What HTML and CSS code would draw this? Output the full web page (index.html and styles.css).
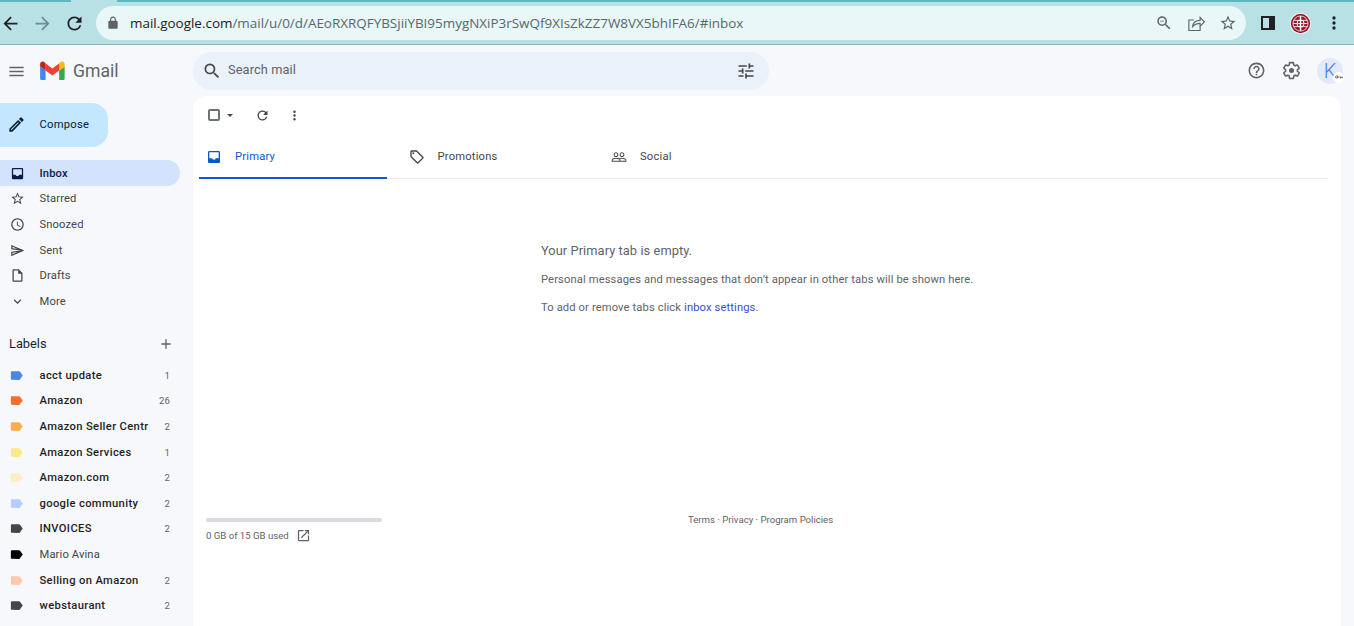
FILE: index.html
```html
<!DOCTYPE html>
<html lang="en">
<head>
<meta charset="utf-8">
<title>Inbox - Gmail</title>
<link rel="stylesheet" href="styles.css">
</head>
<body>
<svg class="sprite" xmlns="http://www.w3.org/2000/svg">
  <symbol id="i-arrow" viewBox="0 0 24 24"><path d="M20 11H7.83l5.59-5.59L12 4l-8 8 8 8 1.41-1.41L7.83 13H20v-2z"/></symbol>
  <symbol id="i-reload" viewBox="0 0 24 24"><path d="M17.65 6.35A7.958 7.958 0 0 0 12 4c-4.42 0-7.99 3.58-7.99 8s3.57 8 7.99 8c3.73 0 6.84-2.55 7.73-6h-2.08A5.99 5.99 0 0 1 12 18c-3.31 0-6-2.69-6-6s2.69-6 6-6c1.66 0 3.14.69 4.22 1.78L13 11h7V4l-2.35 2.35z"/></symbol>
  <symbol id="i-star" viewBox="0 0 24 24"><path d="M22 9.24l-7.19-.62L12 2 9.19 8.63 2 9.24l5.46 4.73L5.82 21 12 17.27 18.18 21l-1.63-7.03L22 9.24zM12 15.4l-3.76 2.27 1-4.28-3.32-2.88 4.38-.38L12 6.1l1.71 4.04 4.38.38-3.32 2.88 1 4.28L12 15.4z"/></symbol>
  <symbol id="i-search" viewBox="0 0 24 24"><path d="M15.5 14h-.79l-.28-.27A6.471 6.471 0 0 0 16 9.5 6.5 6.5 0 1 0 9.5 16c1.61 0 3.09-.59 4.23-1.57l.27.28v.79l5 4.99L20.49 19l-4.99-5zm-6 0C7.01 14 5 11.99 5 9.5S7.01 5 9.5 5 14 7.01 14 9.5 11.99 14 9.5 14z"/></symbol>
  <symbol id="i-inbox" viewBox="0 0 24 24"><path fill-rule="evenodd" d="M19 3H5c-1.1 0-2 .9-2 2v14c0 1.1.9 2 2 2h14c1.1 0 2-.9 2-2V5c0-1.1-.9-2-2-2zm0 11h-4c-.55 1.16-1.73 2-3.13 2s-2.6-.84-3.13-2H5V5h14v9z"/></symbol>
  <symbol id="i-more" viewBox="0 0 24 24"><path d="M12 8a2 2 0 1 0 0-4 2 2 0 0 0 0 4zm0 2a2 2 0 1 0 0 4 2 2 0 0 0 0-4zm0 6a2 2 0 1 0 0 4 2 2 0 0 0 0-4z"/></symbol>
  <symbol id="i-label" viewBox="0 0 24 24"><path d="M17.63 5.84C17.27 5.33 16.67 5 16 5L5 5.01C3.9 5.01 3 5.9 3 7v10c0 1.1.9 1.99 2 1.99L16 19c.67 0 1.27-.33 1.63-.84L22 12l-4.37-6.16z"/></symbol>
</svg>

<header class="chrome">
  <div class="tabstrip"><span class="strip-a"></span><span class="strip-gap"></span><span class="strip-b"></span></div>
  <div class="toolbar">
    <svg class="cbtn back"><use href="#i-arrow"/></svg>
    <svg class="cbtn forward"><use href="#i-arrow"/></svg>
    <svg class="cbtn reload"><use href="#i-reload"/></svg>
    <div class="omnibox">
      <svg class="lock" viewBox="0 0 24 24"><path d="M18 8h-1V6c0-2.76-2.24-5-5-5S7 3.24 7 6v2H6c-1.1 0-2 .9-2 2v10c0 1.1.9 2 2 2h12c1.1 0 2-.9 2-2V10c0-1.1-.9-2-2-2zM9 6c0-1.66 1.34-3 3-3s3 1.34 3 3v2H9V6z"/></svg>
      <span class="url"><span class="host">mail.google.com</span>/mail/u/0/d/AEoRXRQFYBSjiiYBI95mygNXiP3rSwQf9XIsZkZZ7W8VX5bhIFA6/#inbox</span>
      <span class="omni-actions">
        <svg class="oicon" viewBox="0 0 24 24"><path d="M15.5 14h-.79l-.28-.27A6.471 6.471 0 0 0 16 9.5 6.5 6.5 0 1 0 9.5 16c1.61 0 3.09-.59 4.23-1.57l.27.28v.79l5 4.99L20.49 19l-4.99-5zm-6 0C7.01 14 5 11.99 5 9.5S7.01 5 9.5 5 14 7.01 14 9.5 11.99 14 9.5 14zM7 9h5v1H7z"/></svg>
        <svg class="oicon share" viewBox="0 0 24 24"><path d="M9 8H2.500v14h15v-5"/><path d="M7.500 17c.5-5.500 4.500-8.500 10-8.500V4.500l5.500 6-5.500 6V12.500c-4.500 0-7.500 1.500-10 4.500z"/></svg>
        <svg class="oicon"><use href="#i-star"/></svg>
      </span>
    </div>
    <svg class="sidepanel" viewBox="0 0 14 14"><path fill-rule="evenodd" d="M0 0h14v14H0zM2 2v10h6V2z"/></svg>
    <svg class="extension" viewBox="0 0 20 20">
      <circle cx="10" cy="10" r="10" fill="#fff"/>
      <circle cx="10" cy="10" r="9.200" fill="#96182f"/>
      <circle cx="10" cy="10" r="7.200" fill="none" stroke="#fff" stroke-width=".7"/>
      <path d="M3.500 7h13M3 10h14M3.500 13h13" stroke="#fff" stroke-width=".8"/>
      <path d="M10 3v14" stroke="#fff" stroke-width="1.400"/>
      <circle cx="10" cy="10" r="3.400" fill="none" stroke="#fff" stroke-width=".9"/>
    </svg>
    <svg class="cmenu"><use href="#i-more"/></svg>
  </div>
</header>

<div class="app">
  <div class="app-head">
    <div class="brand">
      <svg class="hamburger" viewBox="0 0 24 24"><path d="M3 18h18v-2H3v2zm0-5h18v-2H3v2zm0-7v2h18V6H3z"/></svg>
      <svg class="gmail-logo" viewBox="0 0 52 42">
        <path fill="#4285f4" d="M3.500 40h8V20L0 11.500v25C0 38.400 1.600 40 3.500 40z"/>
        <path fill="#34a853" d="M40 40h8c2 0 3.500-1.600 3.500-3.500v-25L40 20z"/>
        <path fill="#fbbc04" d="M40 5v15l11.500-8.500v-5c0-4.300-4.900-6.700-8.300-4.200z"/>
        <path fill="#ea4335" d="M11.500 20V5l14.300 10.700L40 5v15L25.800 30.700z"/>
        <path fill="#c5221f" d="M0 6.500v5L11.500 20V5L8.300 2.300C4.900-.2 0 2.200 0 6.500z"/>
      </svg>
      <span class="gmail-word">Gmail</span>
    </div>
    <div class="search">
      <svg class="search-icon"><use href="#i-search"/></svg>
      <span class="search-text">Search mail</span>
      <svg class="tune" viewBox="0 0 24 24"><path d="M3 17v2h6v-2H3zM3 5v2h10V5H3zm10 16v-2h8v-2h-8v-2h-2v6h2zM7 9v2H3v2h4v2h2V9H7zm14 4v-2H11v2h10zm-6-4h2V7h4V5h-4V3h-2v6z"/></svg>
    </div>
    <div class="head-actions">
      <svg class="head-icon" viewBox="0 0 24 24"><path d="M11 18h2v-2h-2v2zm1-16C6.480 2 2 6.480 2 12s4.480 10 10 10 10-4.480 10-10S17.520 2 12 2zm0 18c-4.410 0-8-3.590-8-8s3.590-8 8-8 8 3.590 8 8-3.590 8-8 8zm0-14c-2.210 0-4 1.790-4 4h2c0-1.100.9-2 2-2s2 .9 2 2c0 2-3 1.750-3 5h2c0-2.250 3-2.500 3-5 0-2.210-1.790-4-4-4z"/></svg>
      <svg class="head-icon" viewBox="0 0 24 24"><path class="gear-line" d="M19.430 12.980c.04-.32.07-.64.07-.98s-.03-.66-.07-.98l2.110-1.650c.19-.15.24-.42.12-.64l-2-3.460c-.12-.22-.39-.3-.61-.22l-2.490 1c-.52-.4-1.080-.73-1.690-.98l-.38-2.650C14.460 2.180 14.250 2 14 2h-4c-.25 0-.46.18-.49.42l-.38 2.650c-.61.25-1.170.59-1.690.98l-2.490-1c-.23-.09-.49 0-.61.22l-2 3.460c-.13.22-.07.49.12.64l2.110 1.650c-.04.32-.07.65-.07.98s.03.66.07.98l-2.110 1.650c-.19.15-.24.42-.12.64l2 3.460c.12.22.39.3.61.22l2.490-1c.52.4 1.080.73 1.690.98l.38 2.650c.03.24.24.42.49.42h4c.25 0 .46-.18.49-.42l.38-2.650c.61-.25 1.170-.59 1.690-.98l2.490 1c.23.09.49 0 .61-.22l2-3.460c.12-.22.07-.49-.12-.64l-2.110-1.650z"/><circle cx="12" cy="12" r="3.200"/></svg>
      <div class="avatar">K
        <span class="key-badge"><svg class="key" viewBox="0 0 12 6"><circle class="key-ring" cx="2.500" cy="3" r="1.700"/><path d="M4 2.500h8v1h-1v1.500h-1V3.500H8.500V5h-1V3.500H4z"/></svg></span>
      </div>
    </div>
  </div>

  <div class="app-body">
    <aside class="sidebar">
      <button class="compose">
        <svg class="compose-icon" viewBox="0 0 24 24"><path d="M3 17.250V21h3.750L17.810 9.940l-3.750-3.750L3 17.250zM5.920 19H5v-.92l9.060-9.060.92.92L5.920 19zM20.710 5.630l-2.340-2.340c-.2-.2-.45-.29-.71-.29s-.51.1-.7.29l-1.830 1.830 3.750 3.750 1.830-1.830c.39-.39.39-1.020 0-1.410z"/></svg>
        <span>Compose</span>
      </button>
      <nav class="nav">
        <a class="row active"><svg class="row-icon"><use href="#i-inbox"/></svg><span>Inbox</span></a>
        <a class="row"><svg class="row-icon"><use href="#i-star"/></svg><span>Starred</span></a>
        <a class="row"><svg class="row-icon" viewBox="0 0 24 24"><path d="M11.990 2C6.470 2 2 6.480 2 12s4.470 10 9.990 10C17.520 22 22 17.520 22 12S17.520 2 11.990 2zM12 20c-4.420 0-8-3.580-8-8s3.580-8 8-8 8 3.580 8 8-3.580 8-8 8zm.5-13H11v6l5.250 3.150.75-1.230-4.500-2.670z"/></svg><span>Snoozed</span></a>
        <a class="row"><svg class="row-icon" viewBox="0 0 24 24"><path d="M4.010 6.030l7.510 3.220-7.520-1 .01-2.220m7.500 8.720L4 17.970v-2.220l7.510-1M2.010 3L2 10l15 2-15 2 .01 7L23 12 2.010 3z"/></svg><span>Sent</span></a>
        <a class="row"><svg class="row-icon" viewBox="0 0 24 24"><path d="M14 2H6c-1.100 0-1.990.9-1.990 2L4 20c0 1.100.89 2 1.990 2H18c1.100 0 2-.9 2-2V8l-6-6zM6 20V4h7v5h5v11H6z"/></svg><span>Drafts</span></a>
        <a class="row"><svg class="row-icon" viewBox="0 0 24 24"><path d="M7.410 8.590L12 13.170l4.590-4.580L18 10l-6 6-6-6z"/></svg><span>More</span></a>
      </nav>
      <div class="labels-head">
        <span>Labels</span>
        <svg class="plus" viewBox="0 0 24 24"><path d="M19 13h-6v6h-2v-6H5v-2h6V5h2v6h6v2z"/></svg>
      </div>
      <div class="labels">
        <a class="row unread"><svg class="label-icon c-blue"><use href="#i-label"/></svg><span class="name">acct update</span><span class="count">1</span></a>
        <a class="row unread"><svg class="label-icon c-orange"><use href="#i-label"/></svg><span class="name">Amazon</span><span class="count">26</span></a>
        <a class="row unread"><svg class="label-icon c-amber"><use href="#i-label"/></svg><span class="name">Amazon Seller Centr</span><span class="count">2</span></a>
        <a class="row unread"><svg class="label-icon c-yellow"><use href="#i-label"/></svg><span class="name">Amazon Services</span><span class="count">1</span></a>
        <a class="row unread"><svg class="label-icon c-cream"><use href="#i-label"/></svg><span class="name">Amazon.com</span><span class="count">2</span></a>
        <a class="row unread"><svg class="label-icon c-sky"><use href="#i-label"/></svg><span class="name">google community</span><span class="count">2</span></a>
        <a class="row unread"><svg class="label-icon c-char"><use href="#i-label"/></svg><span class="name">INVOICES</span><span class="count">2</span></a>
        <a class="row"><svg class="label-icon c-black"><use href="#i-label"/></svg><span class="name">Mario Avina</span></a>
        <a class="row unread"><svg class="label-icon c-peach"><use href="#i-label"/></svg><span class="name">Selling on Amazon</span><span class="count">2</span></a>
        <a class="row unread"><svg class="label-icon c-char"><use href="#i-label"/></svg><span class="name">webstaurant</span><span class="count">2</span></a>
      </div>
    </aside>

    <main class="card">
      <div class="actions">
        <span class="checkbox"></span>
        <span class="caret"></span>
        <svg class="action-icon refresh"><use href="#i-reload"/></svg>
        <svg class="action-icon kebab"><use href="#i-more"/></svg>
      </div>
      <div class="tabs">
        <div class="tab selected"><svg class="tab-icon"><use href="#i-inbox"/></svg><span>Primary</span></div>
        <div class="tab"><svg class="tab-icon" viewBox="0 0 24 24"><path d="M21.410 11.580l-9-9C12.050 2.220 11.550 2 11 2H4c-1.100 0-2 .9-2 2v7c0 .55.22 1.050.59 1.420l9 9c.36.36.86.58 1.410.58.55 0 1.050-.22 1.410-.59l7-7c.37-.36.59-.86.59-1.410 0-.55-.23-1.060-.59-1.420zM13 20.010L4 11V4h7v-.01l9 9-7 7.020z"/><circle cx="6.500" cy="6.500" r="1.500"/></svg><span>Promotions</span></div>
        <div class="tab"><svg class="tab-icon" viewBox="0 0 24 24"><path d="M16.500 13c-1.200 0-3.070.34-4.500 1-1.430-.67-3.300-1-4.500-1C5.330 13 1 14.080 1 16.250V19h22v-2.750c0-2.170-4.330-3.250-6.500-3.250zm-4 4.500h-10v-1.250c0-.54 2.560-1.750 5-1.750s5 1.210 5 1.750v1.250zm9 0H14v-1.250c0-.46-.2-.86-.52-1.220.88-.3 1.960-.53 3.020-.53 2.440 0 5 1.210 5 1.750v1.250zM7.500 12c1.930 0 3.500-1.570 3.500-3.500S9.430 5 7.500 5 4 6.570 4 8.500 5.570 12 7.500 12zm0-5.500c1.100 0 2 .9 2 2s-.9 2-2 2-2-.9-2-2 .9-2 2-2zm9 5.500c1.930 0 3.500-1.570 3.500-3.500S18.430 5 16.500 5 13 6.570 13 8.500s1.570 3.500 3.500 3.500zm0-5.500c1.100 0 2 .9 2 2s-.9 2-2 2-2-.9-2-2 .9-2 2-2z"/></svg><span>Social</span></div>
      </div>
      <section class="empty">
        <h2 class="empty-title">Your Primary tab is empty.</h2>
        <p class="empty-line">Personal messages and messages that don’t appear in other tabs will be shown here.</p>
        <p class="empty-line">To add or remove tabs click <a class="link">inbox settings</a>.</p>
      </section>
      <footer class="foot">
        <div class="storage">
          <div class="meter"></div>
          <div class="used"><span>0 GB of 15 GB used</span><svg class="open-icon" viewBox="0 0 24 24"><path d="M19 19H5V5h7V3H5a2 2 0 0 0-2 2v14a2 2 0 0 0 2 2h14c1.100 0 2-.9 2-2v-7h-2v7zM14 3v2h3.590l-9.830 9.830 1.410 1.410L19 6.410V10h2V3h-7z"/></svg></div>
        </div>
        <div class="terms">Terms · Privacy · Program Policies</div>
      </footer>
    </main>
  </div>
</div>
</body>
</html>
```

FILE: styles.css
```css
* { box-sizing: border-box; }
html, body { margin: 0; height: 100%; }
body {
  width: 1354px;
  height: 626px;
  overflow: hidden;
  display: flex;
  flex-direction: column;
  background: #f6f8fc;
  font-family: Roboto, "Liberation Sans", sans-serif;
  font-size: 11.2px;
  color: #444746;
}
.sprite { display: none; }
svg { display: block; flex: none; }

/* browser chrome */
.chrome { height: 45px; flex: none; background: #b8e1e5; border-bottom: 1px solid #8fb6b9; }
.tabstrip { display: flex; height: 2px; }
.strip-a { width: 71px; background: #5fb8bd; }
.strip-gap { width: 46px; }
.strip-b { flex: 1; background: #5fb8bd; }
.toolbar { display: flex; align-items: center; height: 42px; }
.cbtn { width: 21px; height: 21px; }
.back { margin-left: 0; fill: #202124; }
.forward { margin-left: 11px; fill: #6f8c8f; transform: scaleX(-1); }
.reload { margin-left: 11px; fill: #202124; }
.omnibox {
  display: flex;
  align-items: center;
  width: 1150px;
  height: 34px;
  margin-left: 11px;
  padding: 0 10px;
  border-radius: 17px;
  background: #e9f7f8;
}
.lock { width: 14px; height: 14px; fill: #5f6368; }
.url {
  margin-left: 10px;
  font-family: "Open Sans", "Noto Sans", sans-serif;
  font-size: 13.450px;
  color: #55696b;
  white-space: nowrap;
}
.host { color: #202124; }
.omni-actions { display: flex; gap: 14px; margin-left: auto; margin-right: -1px; }
.oicon { width: 18px; height: 18px; fill: #5f6368; }
.oicon.share { fill: none; stroke: #5f6368; stroke-width: 1.5px; }
.sidepanel { width: 14px; height: 14px; margin-left: 15px; fill: #202124; }
.extension { width: 21px; height: 21px; margin-left: 15px; }
.cmenu { width: 20px; height: 20px; margin-left: 13px; fill: #202124; }

/* app */
.app { flex: 1; display: flex; flex-direction: column; min-height: 0; }
.app-head { display: flex; align-items: center; height: 51px; flex: none; }
.brand { display: flex; align-items: center; width: 193px; padding-left: 7px; padding-top: 1px; }
.hamburger { width: 19px; height: 19px; fill: #5f6368; }
.gmail-logo { width: 25px; height: 20px; margin-left: 14px; }
.gmail-word { margin-left: 8px; font-size: 17.600px; color: #5f6368; }
.search {
  display: flex;
  align-items: center;
  width: 576px;
  height: 38px;
  padding: 0 13px 0 9px;
  border-radius: 19px;
  background: #eaf1fb;
}
.search-icon { width: 20px; height: 20px; fill: #444746; }
.search-text { margin: -2px 0 0 6px; font-size: 12.800px; color: #5f6368; letter-spacing: .1px; }
.tune { width: 20px; height: 20px; margin-left: auto; fill: #444746; }
.head-actions { display: flex; align-items: center; margin-left: auto; padding-right: 11px; }
.head-icon { width: 19px; height: 19px; margin-right: 16px; fill: #5f6368; }
.gear-line { fill: none; stroke: #5f6368; stroke-width: 2px; }
.avatar {
  position: relative;
  width: 26px;
  height: 26px;
  border-radius: 50%;
  background: #e3e9fb;
  color: #4a7ee6;
  font-size: 20px;
  font-weight: 300;
  line-height: 26px;
  text-align: center;
}
.key-badge {
  position: absolute;
  right: -1px;
  bottom: 1px;
  display: flex;
  align-items: center;
  justify-content: center;
  width: 11px;
  height: 11px;
  border-radius: 50%;
  background: #fff;
}
.key { width: 8px; height: 4px; fill: #202124; }
.key-ring { fill: none; stroke: #202124; }

.app-body { flex: 1; display: flex; min-height: 0; }
.sidebar { width: 193px; flex: none; padding-top: 7px; }
.compose {
  display: flex;
  align-items: center;
  width: 108px;
  height: 44px;
  padding: 0 0 2px 7px;
  border: 0;
  border-radius: 0 16px 16px 0;
  background: #c2e7ff;
  color: #001d35;
  font: 400 11.200px Roboto, sans-serif;
  letter-spacing: .25px;
}
.compose-icon { width: 19px; height: 19px; margin-right: 13.500px; fill: #001d35; }
.nav { margin-top: 13px; }
.nav .row { padding-top: 1px; }
.row {
  display: flex;
  align-items: center;
  width: 180px;
  height: 25.600px;
  padding: 0 10px;
  border-radius: 0 13px 13px 0;
  color: #444746;
  letter-spacing: .13px;
}
.row.active { background: #d3e3fd; color: #041e49; font-weight: 500; }
.row-icon { width: 15px; height: 15px; margin-right: 14.500px; fill: #444746; }
.row.active .row-icon { fill: #041e49; }
.labels-head {
  display: flex;
  align-items: center;
  justify-content: space-between;
  width: 180px;
  height: 26px;
  margin-top: 17px;
  padding: 0 6px 0 9px;
  font-size: 12.800px;
  color: #1f1f1f;
}
.plus { width: 16px; height: 16px; fill: #5f6368; }
.labels { margin-top: 6px; }
.name { white-space: nowrap; }
.unread .name { font-weight: 500; color: #1f1f1f; letter-spacing: .35px; }
.label-icon { width: 15px; height: 15px; margin: 0 15.500px 0 -1px; }
.count { margin-left: auto; font-size: 9.600px; color: #5f6368; }
.c-blue { fill: #4a86e8; }
.c-orange { fill: #fb6d31; }
.c-amber { fill: #ffad47; }
.c-yellow { fill: #fbe983; }
.c-cream { fill: #fdedc1; }
.c-sky { fill: #b3cefb; }
.c-char { fill: #464646; }
.c-black { fill: #000; }
.c-peach { fill: #ffc8af; }

/* main card */
.card {
  flex: 1;
  display: flex;
  flex-direction: column;
  margin-right: 13px;
  padding: 0 13px 0 6px;
  border-radius: 13px 13px 0 0;
  background: #fff;
}
.actions { display: flex; align-items: center; height: 38px; padding-left: 9px; flex: none; }
.checkbox { width: 12px; height: 12px; border: 2px solid #6f7377; border-radius: 2px; }
.caret {
  width: 0;
  height: 0;
  margin-left: 7px;
  border: 3.500px solid transparent;
  border-top: 3.500px solid #444746;
  border-bottom: 0;
}
.action-icon { width: 15px; height: 15px; fill: #444746; }
.refresh { margin-left: 22px; }
.kebab { margin-left: 17px; }
.tabs { display: flex; height: 45px; flex: none; border-bottom: 1px solid #eceff1; }
.tab {
  position: relative;
  display: flex;
  align-items: center;
  width: 202.500px;
  padding: 0 0 0 7px;
  margin-bottom: -1px;
  color: #444746;
  letter-spacing: .2px;
}
.tab-icon { width: 16px; height: 16px; margin-right: 13px; fill: #444746; }
.tab.selected { color: #0b57d0; }
.tab.selected .tab-icon { fill: #0b57d0; }
.tab.selected::after {
  content: "";
  position: absolute;
  left: 0;
  bottom: 0;
  width: 188px;
  height: 2px;
  background: #0b57d0;
}
.empty { margin: 64px 0 0 342px; color: #5f6368; }
.empty-title { margin: 0 0 13px; font-size: 12.800px; font-weight: 400; line-height: 16px; letter-spacing: .08px; }
.empty-line { margin: 12px 0 0; line-height: 16px; letter-spacing: .12px; }
.link { color: #3c4ec9; }
.foot { display: flex; margin-top: 202px; padding-left: 7px; }
.storage { width: 176px; }
.meter { height: 4px; border-radius: 2px; background: #dadce0; }
.used { display: flex; align-items: center; gap: 7px; margin-top: 6px; font-size: 9.600px; color: #5f6368; }
.open-icon { width: 15px; height: 15px; fill: #5f6368; }
.terms { margin: -4px 0 0 306px; font-size: 9.600px; line-height: 12px; color: #5f6368; }
```
